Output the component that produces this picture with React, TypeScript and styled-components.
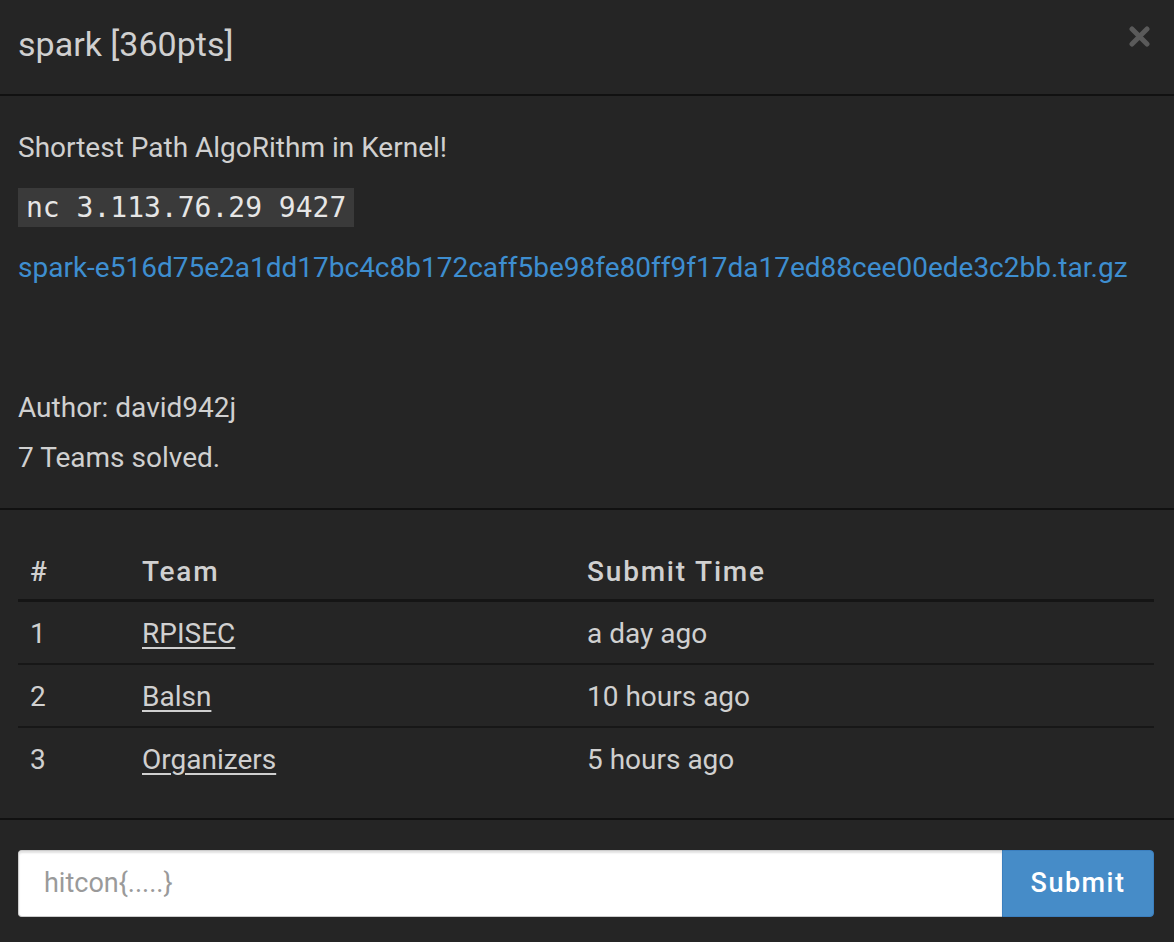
import React from "react";
import styled, { createGlobalStyle } from "styled-components";

const GlobalStyle = createGlobalStyle`
  html, body {
    margin: 0;
    padding: 0;
    background: #252525;
  }
  body {
    font-family: Roboto, "Liberation Sans", sans-serif;
    color: #d0d0d0;
  }
`;

const solves = [
  { rank: 1, team: "RPISEC", time: "a day ago" },
  { rank: 2, team: "Balsn", time: "10 hours ago" },
  { rank: 3, team: "Organizers", time: "5 hours ago" },
];

const CloseIcon: React.FC = () => (
  <svg width="21" height="21" viewBox="0 0 21 21">
    <path
      d="M3 3 L18 18 M18 3 L3 18"
      stroke="#5a5a5a"
      strokeWidth="5"
      strokeLinecap="round"
    />
  </svg>
);

export default function App() {
  return (
    <>
      <GlobalStyle />
      <Modal>
        <Header>
          <Title>spark [360pts]</Title>
          <CloseButton aria-label="close">
            <CloseIcon />
          </CloseButton>
        </Header>
        <Body>
          <Line>Shortest Path AlgoRithm in Kernel!</Line>
          <Line>
            <Code>nc 3.113.76.29 9427</Code>
          </Line>
          <Line>
            <FileLink href="#">
              spark-e516d75e2a1dd17bc4c8b172caff5be98fe80ff9f17da17ed88cee00ede3c2bb.tar.gz
            </FileLink>
          </Line>
          <Meta>
            Author: david942j
            <br />7 Teams solved.
          </Meta>
        </Body>
        <TableSection>
          <Table>
            <thead>
              <tr>
                <Th $width="112px">#</Th>
                <Th $width="445px">Team</Th>
                <Th>Submit Time</Th>
              </tr>
            </thead>
            <tbody>
              {solves.map((s, i) => (
                <tr key={s.rank}>
                  <Td $first={i === 0}>{s.rank}</Td>
                  <Td $first={i === 0}>
                    <TeamLink href="#">{s.team}</TeamLink>
                  </Td>
                  <Td $first={i === 0}>{s.time}</Td>
                </tr>
              ))}
            </tbody>
          </Table>
        </TableSection>
        <Footer>
          <FlagForm onSubmit={(e) => e.preventDefault()}>
            <FlagInput placeholder="hitcon{.....}" />
            <SubmitButton type="submit">Submit</SubmitButton>
          </FlagForm>
        </Footer>
      </Modal>
    </>
  );
}

const Modal = styled.div`
  width: 1174px;
  min-height: 942px;
  background: #252525;
`;

const Header = styled.div`
  display: flex;
  align-items: center;
  justify-content: space-between;
  height: 96px;
  padding: 0 24px 6px 18px;
  box-sizing: border-box;
  border-bottom: 2px solid #111;
`;

const Title = styled.h4`
  margin: 0;
  font-size: 34px;
  font-weight: 400;
  color: #d0d0d0;
`;

const CloseButton = styled.button`
  display: flex;
  padding: 0;
  margin-top: -16px;
  border: 0;
  background: none;
  cursor: pointer;
`;

const Body = styled.div`
  padding: 27px 18px 25px;
  border-bottom: 2px solid #111;
  font-size: 28px;
`;

const Line = styled.p`
  margin: 0 0 10px;
  line-height: 50px;
  white-space: nowrap;
`;

const Code = styled.code`
  font-family: "DejaVu Sans Mono", "Liberation Mono", monospace;
  font-size: 28px;
  background: #3a3a3a;
  color: #e6e6e6;
  padding: 3px 8px;
`;

const FileLink = styled.a`
  color: #3e8ed0;
  text-decoration: none;
`;

const Meta = styled.p`
  margin: 90px 0 0;
  line-height: 50px;
`;

const TableSection = styled.div`
  padding: 30px 20px 29px 18px;
  border-bottom: 2px solid #111;
`;

const Table = styled.table`
  width: 100%;
  border-collapse: collapse;
  font-size: 28px;
`;

const Th = styled.th<{ $width?: string }>`
  width: ${(p) => p.$width || "auto"};
  height: 60px;
  padding: 4px 12px 0;
  box-sizing: border-box;
  text-align: left;
  vertical-align: middle;
  font-weight: 500;
  letter-spacing: 1.8px;
  color: #d0d0d0;
  border-bottom: 3px solid #151515;
`;

const Td = styled.td<{ $first?: boolean }>`
  height: 58px;
  padding: 3px 12px 0;
  vertical-align: middle;
  color: #d0d0d0;
  border-top: ${(p) => (p.$first ? "0" : "2px solid #171717")};
`;

const TeamLink = styled.a`
  color: #d0d0d0;
  text-decoration: underline;
  text-underline-offset: 4px;
`;

const Footer = styled.div`
  padding: 30px 20px 25px 18px;
`;

const FlagForm = styled.form`
  display: flex;
  height: 67px;
`;

const FlagInput = styled.input`
  flex: 1;
  min-width: 0;
  height: 100%;
  box-sizing: border-box;
  padding: 0 25px;
  border: 1px solid #ccc;
  border-right: 0;
  border-radius: 4px 0 0 4px;
  box-shadow: inset 0 2px 2px rgba(0, 0, 0, 0.12);
  font-family: Roboto, "Liberation Sans", sans-serif;
  font-size: 27px;
  color: #333;
  outline: none;
  &::placeholder {
    color: #9a9a9a;
  }
`;

const SubmitButton = styled.button`
  width: 152px;
  height: 100%;
  border: 1px solid #3b7fbf;
  border-radius: 0 4px 4px 0;
  background: #468cc8;
  color: #fff;
  font-family: Roboto, "Liberation Sans", sans-serif;
  font-size: 27px;
  font-weight: 500;
  letter-spacing: 1.5px;
  cursor: pointer;
`;
